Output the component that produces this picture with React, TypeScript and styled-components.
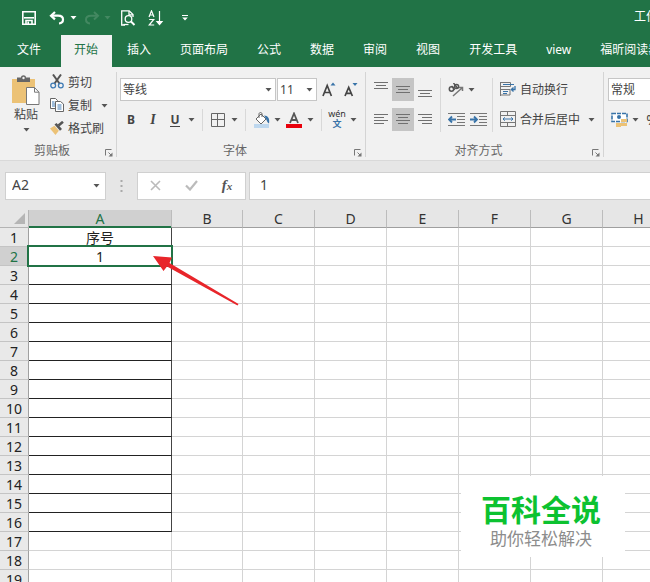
import React from "react";
import styled, { createGlobalStyle, css } from "styled-components";

const uiFont = `"Noto Sans", "Noto Sans CJK SC", sans-serif`;
const green = "#217346";

const GlobalStyle = createGlobalStyle`
  *, *::before, *::after { box-sizing: border-box; }
  body { margin: 0; background: #fff; font-family: ${uiFont}; font-size: 12px; color: #444; }
  button, input, select { font: inherit; color: inherit; margin: 0; padding: 0; border: 0; background: none; border-radius: 0; }
  svg { display: block; flex: none; }
`;

const Window = styled.div`
  position: relative;
  display: flex;
  flex-direction: column;
  height: 100vh;
  overflow: hidden;
`;

/* ---------- Title bar and tabs ---------- */

const TitleBar = styled.header`
  display: flex;
  align-items: center;
  height: 35px;
  flex: none;
  padding-left: 18px;
  background: ${green};
  color: #fff;
`;

const QuickAccess = styled.div`
  display: flex;
  align-items: center;
  gap: 5px;
`;

const Title = styled.div`
  width: 16px;
  margin-left: auto;
  padding-bottom: 4px;
  overflow: hidden;
  white-space: nowrap;
`;

const TabBar = styled.nav`
  display: flex;
  gap: 2px;
  height: 32px;
  flex: none;
  overflow: hidden;
  background: ${green};
`;

const Tab = styled.button<{ $active?: boolean; $file?: boolean }>`
  flex: none;
  padding: ${(p) => (p.$file ? "0 18px 4px 17px" : "0 14px 4px 13px")};
  white-space: nowrap;
  color: ${(p) => (p.$active ? green : "#fff")};
  background: ${(p) => (p.$active ? "#f1f1f1" : "transparent")};
`;

/* ---------- Ribbon ---------- */

const Ribbon = styled.section`
  display: flex;
  height: 94px;
  flex: none;
  overflow: hidden;
  background: #f1f1f1;
  border-bottom: 1px solid #d9d9d9;
`;

const GroupBox = styled.div`
  position: relative;
  display: flex;
  flex-direction: column;
  flex: none;
  padding: 4px 0 2px;
  &:not(:last-child)::after {
    content: "";
    position: absolute;
    top: 5px;
    right: 0;
    bottom: 3px;
    width: 1px;
    background: #d4d4d4;
  }
`;

const GroupBody = styled.div<{ $pad: string }>`
  display: flex;
  flex: 1;
  align-items: flex-start;
  padding: ${(p) => p.$pad};
`;

const GroupLabel = styled.div`
  display: flex;
  align-items: center;
  height: 16px;
  padding-right: 4px;
  color: #666;
  span { flex: 1; text-align: center; }
`;

const Stack = styled.div<{ $gap?: number }>`
  display: flex;
  flex-direction: column;
  gap: ${(p) => p.$gap ?? 0}px;
`;

const Row = styled.div`
  display: flex;
  align-items: center;
  height: 23px;
`;

const IconButton = styled.button<{ $w?: number; $on?: boolean; $size?: number }>`
  display: flex;
  align-items: center;
  justify-content: center;
  flex: none;
  width: ${(p) => p.$w ?? 22}px;
  height: 23px;
  background: ${(p) => (p.$on ? "#c5c5c5" : "transparent")};
  font-size: ${(p) => p.$size ?? 12}px;
`;

const LauncherButton = styled(IconButton)`
  padding-top: 5px;
`;

const TextButton = styled.button`
  display: flex;
  align-items: center;
  gap: 4px;
  height: 23px;
  padding-bottom: 2px;
  white-space: nowrap;
`;

const PasteButton = styled.button`
  display: flex;
  flex-direction: column;
  align-items: center;
  width: 40px;
  padding-top: 4px;
  line-height: 16px;
  svg + span { margin-top: 1px; }
  span + svg { margin-top: 5px; }
`;

const Divider = styled.span<{ $h: number; $m: string }>`
  flex: none;
  width: 1px;
  height: ${(p) => p.$h}px;
  margin: ${(p) => p.$m};
  background: #d8d8d8;
`;

const Picker = styled.span<{ $w: number }>`
  display: grid;
  align-items: center;
  flex: none;
  width: ${(p) => p.$w}px;
  height: 23px;
  margin-right: 1px;
  background: #fff;
  border: 1px solid #c6c6c6;
  select, svg { grid-area: 1 / 1; }
  select { appearance: none; width: 100%; height: 21px; padding-left: 2px; outline: 0; }
  svg { justify-self: end; margin-right: 3px; pointer-events: none; }
`;

const Glyph = styled.span<{ $kind: "bold" | "italic" | "underline" }>`
  font-size: 12px;
  font-weight: 700;
  line-height: 14px;
  ${(p) => p.$kind === "italic" && css`font-family: "Liberation Serif", serif; font-style: italic; font-size: 14px;`}
  ${(p) => p.$kind === "underline" && css`border-bottom: 1px solid #444; line-height: 13px;`}
`;

const Phonetic = styled.span`
  display: flex;
  flex-direction: column;
  align-items: center;
  font-size: 9px;
  line-height: 9px;
  color: #333;
  b { font-size: 9px; line-height: 12px; color: #3873a8; }
`;

/* ---------- Formula bar ---------- */

const FormulaBar = styled.div`
  display: flex;
  align-items: center;
  height: 49px;
  flex: none;
  padding: 0 0 0 5px;
  background: #e6e6e6;
  font-size: 14px;
`;

const BarBox = styled.div<{ $w?: number }>`
  display: flex;
  align-items: center;
  height: 28px;
  flex: ${(p) => (p.$w ? "none" : "1")};
  width: ${(p) => (p.$w ? `${p.$w}px` : "auto")};
  min-width: 0;
  background: #fff;
  border: 1px solid #d0d0d0;
  border-right-width: ${(p) => (p.$w ? 1 : 0)}px;
  input { flex: 1; min-width: 0; height: 26px; padding-left: 6px; padding-bottom: 2px; outline: 0; }
  input[aria-label="编辑栏"] { padding-left: 10px; }
`;

const Spacer = styled.span<{ $w: number }>`
  display: flex;
  justify-content: center;
  flex: none;
  width: ${(p) => p.$w}px;
`;

/* ---------- Sheet ---------- */

const SheetArea = styled.main`
  flex: 1;
  min-height: 0;
  overflow: hidden;
  background: #fff;
`;

const HeadStrip = styled.div`
  background: linear-gradient(#e6e6e6 17px, #9f9f9f 17px, #9f9f9f 18px, #fff 18px);
`;

const Sheet = styled.table`
  table-layout: fixed;
  width: 675px;
  border-collapse: separate;
  border-spacing: 0;
  font-size: 14px;
  line-height: 17px;
  color: #222;
  th, td { padding: 0; text-align: center; font-weight: 400; white-space: nowrap; }
`;

const Col = styled.col<{ $w: number }>`
  width: ${(p) => p.$w}px;
`;

const Corner = styled.td`
  height: 18px;
  background: #e6e6e6;
  border-right: 1px solid #b4b4b4;
  border-bottom: 1px solid #b4b4b4;
  svg { margin-left: auto; margin-right: 3px; }
`;

const ColHead = styled.th<{ $on?: boolean }>`
  height: 18px;
  color: ${(p) => (p.$on ? green : "#333")};
  background: ${(p) => (p.$on ? "#d0d0d0" : "#e6e6e6")};
  border-right: 1px solid #bcbcbc;
  border-bottom: 1px solid ${(p) => (p.$on ? green : "#9f9f9f")};
  box-shadow: ${(p) => (p.$on ? `inset 0 -1px ${green}` : "none")};
`;

const RowHead = styled.th<{ $on?: boolean }>`
  height: 19px;
  color: ${(p) => (p.$on ? green : "#222")};
  background: ${(p) => (p.$on ? "#d0d0d0" : "#e9e9e9")};
  border-right: 1px solid #a0a0a0;
  border-bottom: 1px solid #c4c4c4;
`;

const Cell = styled.td<{ $boxed?: boolean; $active?: boolean }>`
  position: relative;
  height: 19px;
  border-right: 1px solid ${(p) => (p.$boxed ? "#444" : "#d4d4d4")};
  border-bottom: 1px solid ${(p) => (p.$boxed ? "#222" : "#d4d4d4")};
  ${(p) =>
    p.$active &&
    css`
      &::after {
        content: "";
        position: absolute;
        inset: -2px -2px -2px -2px;
        border: 2px solid ${green};
      }
    `}
`;

const Pointer = styled.svg`
  position: absolute;
  z-index: 1;
  left: 123px;
  top: 8px;
`;

const Watermark = styled.aside`
  position: absolute;
  z-index: 2;
  right: 25px;
  bottom: 25px;
  padding: 16px 24px 6px 20px;
  background: #fff;
  text-align: center;
  white-space: nowrap;
  strong { display: block; font-size: 30px; line-height: 35px; font-weight: 700; color: #0cc230; }
  span { display: block; font-size: 17px; line-height: 24px; color: #8c8c8c; }
`;

/* ---------- Icons ---------- */

const Caret = ({ color = "#555" }: { color?: string }) => (
  <svg width="7" height="4" viewBox="0 0 7 4"><path d="M0.500 0h6L3.500 3.500z" fill={color} /></svg>
);

const SaveIcon = () => (
  <svg width="14" height="14" viewBox="0 0 14 14" fill="none" stroke="#fff" strokeWidth="1.600">
    <path d="M0.800 0.800h12.400v12.400H0.800z" /><path d="M2 6.800h10" /><path d="M4 13V9.500h6V13" /><path d="M6.200 10.500V13" />
  </svg>
);
const UndoIcon = () => (
  <svg width="16" height="14" viewBox="0 0 16 14" fill="none" stroke="#fff" strokeWidth="2.200">
    <path d="M6 1L2 4.700L6 8.400" /><path d="M2 4.700h7c3.400 0 5 1.600 5 3.800s-1.700 3.800-4 4" />
  </svg>
);
const RedoIcon = () => (
  <svg width="16" height="14" viewBox="0 0 16 14" fill="none" stroke="#438861" strokeWidth="2">
    <path d="M10 1l4 3.700l-4 3.700" /><path d="M14 4.700H7C3.600 4.700 2 6.300 2 8.500s1.700 3.800 4 4" />
  </svg>
);
const PreviewIcon = () => (
  <svg width="16" height="16" viewBox="0 0 16 16" fill="none" stroke="#fff" strokeWidth="1.300">
    <path d="M5 15H1.700V0.800h7.500L13 4.500V7" /><path d="M9 1v3.800h4" /><circle cx="8.500" cy="9" r="3.300" />
    <path d="M11 11.500l3.500 3.500" strokeWidth="2" /><path d="M3.500 14.500h5" />
  </svg>
);
const SortIcon = () => (
  <svg width="16" height="16" viewBox="0 0 16 16" fill="none" stroke="#fff" strokeWidth="1.200">
    <path d="M1 7L3.500 0.800L6 7M1.800 5h3.400M1.200 9.500h4.500L1.200 15h5" /><path d="M11.500 1v13" /><path d="M9 11.500h5l-2.500 3z" fill="#fff" />
  </svg>
);
const CustomizeIcon = () => (
  <svg width="8" height="6" viewBox="0 0 8 6" fill="#fff"><path d="M1 0h6v1H1zM1.200 2.500h5.600L4 5.500z" /></svg>
);
const PasteIcon = () => (
  <svg width="30" height="31" viewBox="0 0 30 31">
    <path d="M1 4h23v24H1z" fill="#ecc276" />
    <path d="M6 2.500h4c0-3 5-3 5 0h4V7H6z" fill="#666" /><circle cx="12.500" cy="3" r="1.200" fill="#f1f1f1" />
    <path d="M15.500 12.500h8l4.500 4.700v12.300H15.500z" fill="#fff" stroke="#777" /><path d="M23.500 12.500v4.700H28" fill="none" stroke="#777" />
  </svg>
);
const CutIcon = () => (
  <svg width="14" height="15" viewBox="0 0 14 15" fill="none">
    <path d="M3 0.500L9.800 10M11 0.500L4.200 10" stroke="#555" strokeWidth="2" />
    <circle cx="3.200" cy="11.500" r="2.400" stroke="#3f7bb5" strokeWidth="1.300" /><circle cx="10.800" cy="11.500" r="2.400" stroke="#3f7bb5" strokeWidth="1.300" />
  </svg>
);
const CopyIcon = () => (
  <svg width="14" height="14" viewBox="0 0 14 14" fill="#fff" stroke="#666">
    <path d="M0.500 0.500h5l2 2v8h-7z" /><path d="M2 4h2.500M2 6h3M2 8h3" stroke="#3f7bb5" />
    <path d="M5.500 3.500h5l3 2.500v7.500h-8z" /><path d="M7.500 7h4M7.500 9h4M7.500 11h4" stroke="#3f7bb5" />
  </svg>
);
const BrushIcon = () => (
  <svg width="14" height="14" viewBox="0 0 14 14">
    <path d="M0 7.500l4.500-2.700l4.300 5L5.500 14z" fill="#ecc276" /><path d="M4.500 3.500l2-1.500l5.500 6l-2 1.700z" fill="#555" />
    <path d="M8.500 4.500L13 0.800" stroke="#555" strokeWidth="2.600" />
  </svg>
);
const LauncherIcon = () => (
  <svg width="8" height="8" viewBox="0 0 8 8" fill="none" stroke="#777">
    <path d="M0.500 6.500v-6h6M3.500 3.500L6 6" /><path d="M7.500 3.500v4h-4z" fill="#777" stroke="none" />
  </svg>
);
const SizeIcon = ({ down }: { down?: boolean }) => (
  <svg width="14" height="16" viewBox="0 0 14 16">
    <path d={down ? "M1 14L4.700 5.500L8.400 14M2.300 11.300h4.800" : "M1 14L5.200 3.500L9.400 14M2.400 10.500h5.600"} fill="none" stroke="#444" strokeWidth="1.700" />
    <path d={down ? "M8.500 1h5L11 4z" : "M8.500 3.500h5L11 0.500z"} fill="#3873a8" />
  </svg>
);
const BorderIcon = () => (
  <svg width="14" height="14" viewBox="0 0 14 14" fill="none" stroke="#666"><path d="M0.500 0.500h13v13h-13zM6.500 1v12M1 6.500h12" /></svg>
);
const FillIcon = () => (
  <svg width="17" height="16" viewBox="0 0 17 16">
    <path d="M1 12h15v4H1z" fill="#bdd7ee" /><path d="M3 7l5-5l5 5l-5 5z" fill="#fff" stroke="#666" /><path d="M6 6V2c0-2 3-2 3 0v3" fill="none" stroke="#666" />
    <path d="M11 3.500c4 0 6 3 5 8c-2-1-2-3.500-5-8z" fill="#3873a8" />
  </svg>
);
const FontColorIcon = () => (
  <svg width="16" height="16" viewBox="0 0 16 16">
    <path d="M4 11L8 1.500L12 11M5.300 8h5.400" fill="none" stroke="#555" strokeWidth="1.800" /><path d="M0 12h16v4H0z" fill="#e8000b" />
  </svg>
);

type LineSet = [number, number, number][];
const alignments: Record<string, LineSet> = {
  top: [[0, 14, 0], [2, 10, 3], [0, 14, 6]],
  middle: [[0, 14, 4], [2, 10, 7], [0, 14, 10]],
  bottom: [[0, 14, 8], [2, 10, 11], [0, 14, 14]],
  left: [[0, 14, 2], [0, 10, 5], [0, 14, 8], [0, 10, 11]],
  center: [[0, 14, 2], [2, 10, 5], [0, 14, 8], [2, 10, 11]],
  right: [[0, 14, 2], [4, 10, 5], [0, 14, 8], [4, 10, 11]],
};
const AlignIcon = ({ kind }: { kind: string }) => (
  <svg width="14" height="15" viewBox="0 0 14 15" fill="#707070">
    {alignments[kind].map(([x, w, y]) => <path key={y} d={`M${x} ${y}h${w}v1h-${w}z`} />)}
  </svg>
);
const IndentIcon = ({ right }: { right?: boolean }) => (
  <svg width="17" height="14" viewBox="0 0 17 14" fill="none" stroke="#777">
    <path d="M0 0.500h17M9 3.500h8M9 6.500h8M9 9.500h8M0 12.500h17" />
    <path d={right ? "M0 6.500h6M4 3.500l3 3l-3 3" : "M2 6.500h6M4 3.500l-3 3l3 3"} stroke="#3873a8" strokeWidth="1.800" />
  </svg>
);
const OrientationIcon = () => (
  <svg width="16" height="14" viewBox="0 0 16 14" fill="none" stroke="#555" strokeWidth="1.500">
    <circle cx="3.500" cy="6" r="2.200" /><path d="M3.500 3l3.300 3.800M5.500 0l4.300 5.500" /><circle cx="8.600" cy="3.600" r="2" />
    <path d="M5 13l9-8M11 4.500h3.500V8" stroke="#777" />
  </svg>
);
const WrapIcon = () => (
  <svg width="16" height="16" viewBox="0 0 16 16" fill="none" stroke="#777">
    <path d="M0.500 1v14M0.500 1.500h10v4h-10M1 8.500h9v5.500H1" /><path d="M3 3.500h11M3 10.500h5M3 12.500h4" stroke="#3873a8" />
    <path d="M15 5v3.500h-3.500M13.500 6.500l-2.200 2l2.200 2" stroke="#3873a8" strokeWidth="1.300" />
  </svg>
);
const MergeIcon = () => (
  <svg width="16" height="16" viewBox="0 0 16 16" fill="none" stroke="#777">
    <path d="M0.500 0.500h15v15h-15zM0.500 4.500h15M0.500 11.500h15M7.500 0.500v4M7.500 11.500v4" />
    <path d="M3 8h10M4.800 6.300L3 8l1.800 1.700M11.200 6.300L13 8l-1.800 1.700" stroke="#3873a8" />
  </svg>
);
const CurrencyIcon = () => (
  <svg width="17" height="16" viewBox="0 0 17 16">
    <path d="M1 1.500h15v8H1z" fill="#fff" stroke="#3873a8" strokeWidth="1.600" strokeDasharray="4 1" /><circle cx="8" cy="5" r="2" fill="#3873a8" />
    <path d="M10 7h6v3h-6zM10 11h6v3h-6zM5 11h5v4H5z" fill="#ecc276" />
  </svg>
);
const DotsIcon = () => (
  <svg width="3" height="12" viewBox="0 0 3 12" fill="#aaa"><path d="M0.500 0h2v2h-2zM0.500 5h2v2h-2zM0.500 10h2v2h-2z" /></svg>
);
const CancelIcon = () => (
  <svg width="11" height="11" viewBox="0 0 11 11" stroke="#bbb" strokeWidth="1.600"><path d="M1 1l9 9M10 1l-9 9" /></svg>
);
const EnterIcon = () => (
  <svg width="13" height="11" viewBox="0 0 13 11" fill="none" stroke="#bbb" strokeWidth="2.200"><path d="M1 5.500l4 4l7-8.500" /></svg>
);
const FunctionMark = styled.span`
  font: italic 700 15px "Liberation Serif", serif;
  color: #555;
  small { font-size: 11px; }
`;

/* ---------- Composition ---------- */

const Group = ({ label, pad, children }: { label?: string; pad: string; children: React.ReactNode }) => (
  <GroupBox>
    <GroupBody $pad={pad}>{children}</GroupBody>
    {label && (
      <GroupLabel>
        <span>{label}</span>
        <LauncherButton $w={9} aria-label={`${label}设置`}><LauncherIcon /></LauncherButton>
      </GroupLabel>
    )}
  </GroupBox>
);

const Drop = ({ label, w = 11, color }: { label: string; w?: number; color?: string }) => (
  <IconButton $w={w} aria-label={`${label}选项`}><Caret color={color} /></IconButton>
);

const Choice = ({ label, value, w, caret = true }: { label: string; value: string; w: number; caret?: boolean }) => (
  <Picker $w={w}>
    <select aria-label={label} defaultValue={value}><option>{value}</option></select>
    {caret && <Caret />}
  </Picker>
);

const tabs = ["开始", "插入", "页面布局", "公式", "数据", "审阅", "视图", "开发工具", "view", "福昕阅读器"];
const columns = [
  { name: "A", width: 143 },
  { name: "B", width: 71 },
  { name: "C", width: 72 },
  { name: "D", width: 72 },
  { name: "E", width: 72 },
  { name: "F", width: 72 },
  { name: "G", width: 72 },
  { name: "H", width: 72 },
];
const values: Record<string, string> = { A1: "序号", A2: "1" };
const rows = Array.from({ length: 19 }, (_, i) => i + 1);

export default function App() {
  return (
    <Window>
      <GlobalStyle />
      <TitleBar>
        <QuickAccess>
          <IconButton aria-label="保存"><SaveIcon /></IconButton>
          <Row>
            <IconButton $w={24} aria-label="撤消"><UndoIcon /></IconButton>
            <Drop label="撤消" w={8} color="#fff" />
          </Row>
          <Row>
            <IconButton $w={20} aria-label="恢复"><RedoIcon /></IconButton>
            <Drop label="恢复" w={10} color="#438861" />
          </Row>
          <IconButton aria-label="打印预览"><PreviewIcon /></IconButton>
          <IconButton $w={24} aria-label="排序"><SortIcon /></IconButton>
          <IconButton $w={24} aria-label="自定义快速访问工具栏"><CustomizeIcon /></IconButton>
        </QuickAccess>
        <Title>工作</Title>
      </TitleBar>
      <TabBar>
        <Tab $file>文件</Tab>
        {tabs.map((t) => <Tab key={t} $active={t === "开始"}>{t}</Tab>)}
      </TabBar>

      <Ribbon>
        <Group label="剪贴板" pad="0 7px 0 6px">
          <PasteButton><PasteIcon /><span>粘贴</span><Caret /></PasteButton>
          <Spacer $w={4} />
          <Stack>
            <TextButton><CutIcon />剪切</TextButton>
            <Row>
              <TextButton><CopyIcon />复制</TextButton>
              <Spacer $w={6} />
              <Drop label="复制" w={12} />
            </Row>
            <TextButton><BrushIcon />格式刷</TextButton>
          </Stack>
        </Group>

        <Group label="字体" pad="7px 4px 0 3px">
          <Stack $gap={7}>
            <Row>
              <Choice label="字体" value="等线" w={156} />
              <Choice label="字号" value="11" w={40} />
              <IconButton aria-label="增大字号"><SizeIcon /></IconButton>
              <IconButton aria-label="减小字号"><SizeIcon down /></IconButton>
            </Row>
            <Row>
              <IconButton aria-label="加粗"><Glyph $kind="bold">B</Glyph></IconButton>
              <IconButton aria-label="倾斜"><Glyph $kind="italic">I</Glyph></IconButton>
              <IconButton aria-label="下划线"><Glyph $kind="underline">U</Glyph></IconButton>
              <Drop label="下划线" />
              <Divider $h={22} $m="0 4px 0 5px" />
              <IconButton aria-label="边框"><BorderIcon /></IconButton>
              <Drop label="边框" />
              <Divider $h={22} $m="0 4px 0 5px" />
              <IconButton aria-label="填充颜色"><FillIcon /></IconButton>
              <Drop label="填充颜色" />
              <IconButton aria-label="字体颜色"><FontColorIcon /></IconButton>
              <Drop label="字体颜色" />
              <Divider $h={22} $m="0 4px 0 5px" />
              <IconButton aria-label="拼音"><Phonetic>wén<b>文</b></Phonetic></IconButton>
              <Drop label="拼音" />
            </Row>
          </Stack>
        </Group>

        <Group label="对齐方式" pad="7px 7px 0 4px">
          <Stack $gap={7}>
            <Row>
              <IconButton aria-label="顶端对齐"><AlignIcon kind="top" /></IconButton>
              <IconButton $on aria-label="垂直居中"><AlignIcon kind="middle" /></IconButton>
              <IconButton aria-label="底端对齐"><AlignIcon kind="bottom" /></IconButton>
            </Row>
            <Row>
              <IconButton aria-label="左对齐"><AlignIcon kind="left" /></IconButton>
              <IconButton $on aria-label="居中"><AlignIcon kind="center" /></IconButton>
              <IconButton aria-label="右对齐"><AlignIcon kind="right" /></IconButton>
            </Row>
          </Stack>
          <Divider $h={54} $m="0 4px" />
          <Stack $gap={7}>
            <Row>
              <IconButton aria-label="方向"><OrientationIcon /></IconButton>
              <Drop label="方向" w={8} />
            </Row>
            <Row>
              <IconButton aria-label="减少缩进量"><IndentIcon /></IconButton>
              <IconButton aria-label="增加缩进量"><IndentIcon right /></IconButton>
            </Row>
          </Stack>
          <Divider $h={54} $m="0 7px 0 3px" />
          <Stack $gap={7}>
            <TextButton><WrapIcon />自动换行</TextButton>
            <Row>
              <TextButton><MergeIcon />合并后居中</TextButton>
              <Spacer $w={6} />
              <Drop label="合并后居中" />
            </Row>
          </Stack>
        </Group>

        <Group pad="7px 0 0 4px">
          <Stack $gap={7}>
            <Row><Choice label="数字格式" value="常规" w={110} caret={false} /></Row>
            <Row>
              <IconButton aria-label="会计数字格式"><CurrencyIcon /></IconButton>
              <Drop label="会计数字格式" />
              <IconButton $size={14} aria-label="百分比样式">%</IconButton>
            </Row>
          </Stack>
        </Group>
      </Ribbon>

      <FormulaBar>
        <BarBox $w={101}>
          <input aria-label="名称框" defaultValue="A2" />
          <IconButton $w={18} aria-label="名称列表"><Caret /></IconButton>
        </BarBox>
        <Spacer $w={31}><DotsIcon /></Spacer>
        <BarBox $w={109}>
          <IconButton $w={35} aria-label="取消"><CancelIcon /></IconButton>
          <IconButton $w={36} aria-label="输入"><EnterIcon /></IconButton>
          <IconButton $w={36} aria-label="插入函数"><FunctionMark>f<small>x</small></FunctionMark></IconButton>
        </BarBox>
        <Spacer $w={3} />
        <BarBox><input aria-label="编辑栏" defaultValue="1" /></BarBox>
      </FormulaBar>

      <SheetArea>
        <HeadStrip>
          <Sheet>
            <colgroup>
              <Col $w={29} />
              {columns.map((c) => <Col key={c.name} $w={c.width} />)}
            </colgroup>
            <thead>
              <tr>
                <Corner><svg width="11" height="11" viewBox="0 0 11 11"><path d="M11 0v11H0z" fill="#b5b5b5" /></svg></Corner>
                {columns.map((c) => <ColHead key={c.name} scope="col" $on={c.name === "A"}>{c.name}</ColHead>)}
              </tr>
            </thead>
            <tbody>
              {rows.map((r) => (
                <tr key={r}>
                  <RowHead scope="row" $on={r === 2}>{r}</RowHead>
                  {columns.map(({ name }) => (
                    <Cell key={name} $boxed={name === "A" && r <= 16} $active={name === "A" && r === 2}>
                      {values[name + r]}
                      {name === "A" && r === 2 && (
                        <Pointer width="88" height="52" viewBox="0 0 88 52" aria-hidden="true">
                          <path d="M1 1L20 2.500L17.500 8L86.500 49L85.500 50.500L15 11.500L11.500 16z" fill="#e8252a" />
                        </Pointer>
                      )}
                    </Cell>
                  ))}
                </tr>
              ))}
            </tbody>
          </Sheet>
        </HeadStrip>
      </SheetArea>

      <Watermark>
        <strong>百科全说</strong>
        <span>助你轻松解决</span>
      </Watermark>
    </Window>
  );
}
